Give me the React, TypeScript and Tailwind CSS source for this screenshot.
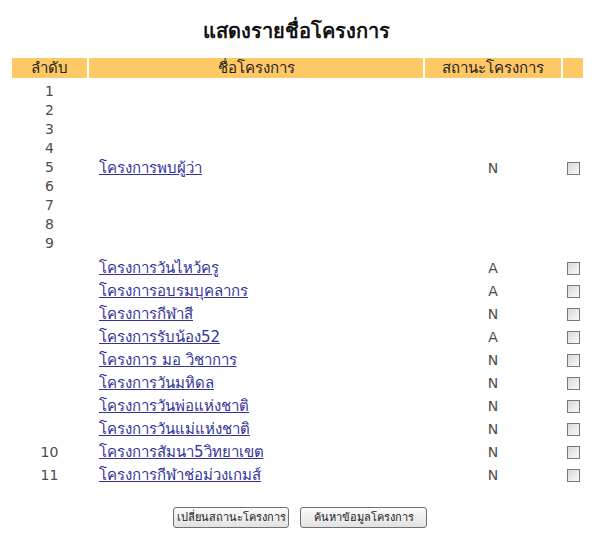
import React from 'react';

type Row = { no?: string; name: string; status: string };

const rows: Row[] = [
  { name: 'โครงการวันไหว้ครู', status: 'A' },
  { name: 'โครงการอบรมบุคลากร', status: 'A' },
  { name: 'โครงการกีฬาสี', status: 'N' },
  { name: 'โครงการรับน้อง52', status: 'A' },
  { name: 'โครงการ มอ วิชาการ', status: 'N' },
  { name: 'โครงการวันมหิดล', status: 'N' },
  { name: 'โครงการวันพ่อแห่งชาติ', status: 'N' },
  { name: 'โครงการวันแม่แห่งชาติ', status: 'N' },
  { no: '10', name: 'โครงการสัมนา5วิทยาเขต', status: 'N' },
  { no: '11', name: 'โครงการกีฬาช่อม่วงเกมส์', status: 'N' },
];

const Check = () => (
  <input
    type="checkbox"
    className="appearance-none block mx-auto w-[13px] h-[13px] border border-[#707a86] bg-gradient-to-br from-[#d8d8d8] to-[#fbfbfb] rounded-none"
  />
);

const App: React.FC = () => {
  return (
    <div className="w-[602px] h-[537px] bg-white pt-[19px] font-['Tahoma','DejaVu_Sans',sans-serif] text-[#4d4d4d]">
      <h1 className="text-center text-[20px] leading-[24px] font-bold text-[#111] pr-[10px]">แสดงรายชื่อโครงการ</h1>

      <table className="mt-[13px] ml-[10px] table-fixed border-separate border-spacing-[2px] text-[14px]">
        <colgroup>
          <col className="w-[75px]" />
          <col className="w-[334px]" />
          <col className="w-[136px]" />
          <col className="w-[20px]" />
        </colgroup>
        <thead>
          <tr className="h-[20px] bg-[#fdc865] text-[15px] leading-[20px] text-[#222]">
            <th className="font-normal p-0">ลำดับ</th>
            <th className="font-normal p-0">ชื่อโครงการ</th>
            <th className="font-normal p-0">สถานะโครงการ</th>
            <th className="p-0"></th>
          </tr>
        </thead>
        <tbody>
          <tr>
            <td className="text-center align-top leading-[19px] pt-[2px] pb-[3px] px-0">
              {['1', '2', '3', '4', '5', '6', '7', '8', '9'].map((n) => (
                <div key={n}>{n}</div>
              ))}
            </td>
            <td className="pl-[10px] align-middle leading-[19px]">
              <a href="#" className="text-[15px] text-[#33339a] underline">โครงการพบผู้ว่า</a>
            </td>
            <td className="text-center align-middle">N</td>
            <td className="align-middle"><Check /></td>
          </tr>
          {rows.map((r, i) => (
            <tr key={i} className="h-[21px] leading-[19px]">
              <td className="text-center p-0">{r.no ?? ''}</td>
              <td className="pl-[10px] p-0">
                <a href="#" className="text-[15px] text-[#33339a] underline">{r.name}</a>
              </td>
              <td className="text-center p-0">{r.status}</td>
              <td className="p-0"><Check /></td>
            </tr>
          ))}
        </tbody>
      </table>

      <div className="mt-[19px] flex justify-center gap-[11px] pr-[2px]">
        <button className="w-[116px] h-[21px] text-[11px] leading-[19px] text-[#222] border border-[#707070] rounded-[3px] bg-gradient-to-b from-[#fbfbfb] to-[#e2e2e2]">
          เปลี่ยนสถานะโครงการ
        </button>
        <button className="w-[127px] h-[21px] text-[11px] leading-[19px] text-[#222] border border-[#707070] rounded-[3px] bg-gradient-to-b from-[#fbfbfb] to-[#e2e2e2]">
          ค้นหาข้อมูลโครงการ
        </button>
      </div>
    </div>
  );
};

export default App;
